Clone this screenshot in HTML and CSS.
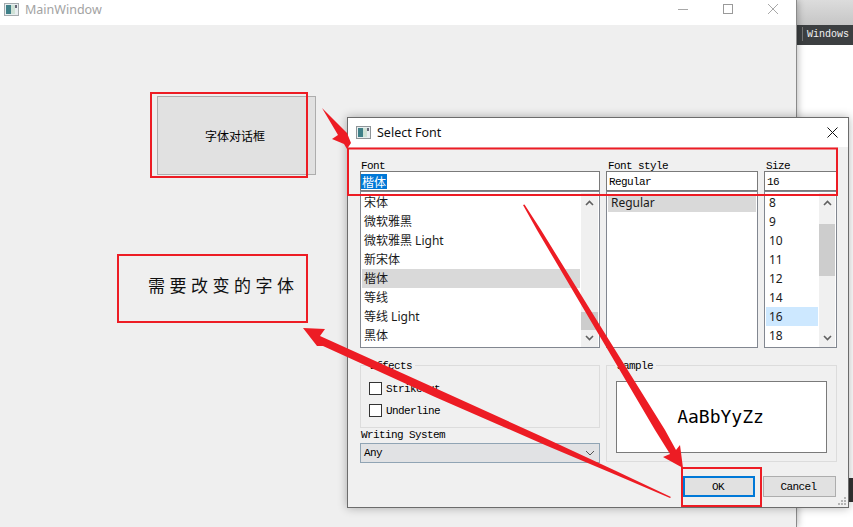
FILE: index.html
```html
<!DOCTYPE html>
<html lang="zh">
<head>
<meta charset="utf-8">
<title>Select Font</title>
<link rel="stylesheet" href="styles.css">
</head>
<body>
<div class="desktop">
  <div class="backdrop">
    <div class="backdrop-top"></div>
    <div class="backdrop-bar"><span class="backdrop-sep"></span><span>Windows</span></div>
    <div class="backdrop-tab"></div>
  </div>

  <section class="window main-window">
    <header class="titlebar main-title">
      <svg class="app-icon" viewBox="0 0 15 13"><rect x=".5" y=".5" width="14" height="12" fill="#e8eef0" stroke="#a4abae"/><rect x="2" y="2" width="5" height="9" fill="#3f8088"/><rect x="7" y="2" width="4" height="9" fill="#cfe2d6"/><rect x="11" y="2" width="2" height="3" fill="#667"/></svg>
      <span class="main-title-text">MainWindow</span>
      <span class="controls">
        <svg viewBox="0 0 10 10"><path d="M0 5.500h10" stroke="#a8a8a8" fill="none"/></svg>
        <svg viewBox="0 0 10 10"><rect x=".5" y=".5" width="9" height="9" stroke="#9a9a9a" fill="none"/></svg>
        <svg viewBox="0 0 10 10"><path d="M0 0l10 10M10 0L0 10" stroke="#a8a8a8" fill="none"/></svg>
      </span>
    </header>
    <div class="main-body">
      <button class="open-button">字体对话框</button>
      <p class="sample-label">需要改变的字体</p>
    </div>
  </section>

  <section class="window dialog">
    <header class="titlebar dialog-title">
      <svg class="app-icon" viewBox="0 0 15 13"><rect x=".5" y=".5" width="14" height="12" fill="#e8eef0" stroke="#8e9598"/><rect x="2" y="2" width="5" height="9" fill="#3f8088"/><rect x="7" y="2" width="4" height="9" fill="#cfe2d6"/><rect x="11" y="2" width="2" height="3" fill="#667"/></svg>
      <span class="dialog-title-text">Select Font</span>
      <svg class="dialog-close" viewBox="0 0 11 11"><path d="M.5.5l10 10M10.500.5l-10 10" stroke="#111" fill="none"/></svg>
    </header>

    <div class="dialog-body">
      <div class="pickers">
        <div class="picker">
          <label class="mono picker-label">Font</label>
          <div class="field"><span class="selected-text">楷体</span></div>
          <div class="listbox">
            <ul class="rows rows-font">
              <li>宋体</li><li>微软雅黑</li><li>微软雅黑 Light</li><li>新宋体</li>
              <li class="row-current">楷体</li><li>等线</li><li>等线 Light</li><li>黑体</li>
            </ul>
            <div class="scrollbar">
              <svg class="chev" viewBox="0 0 9 6"><path d="M1 5l3.500-3.500L8 5" stroke="#606060" stroke-width="1.600" fill="none"/></svg>
              <div class="track"><div class="thumb thumb-font"></div></div>
              <svg class="chev" viewBox="0 0 9 6"><path d="M1 1l3.500 3.500L8 1" stroke="#606060" stroke-width="1.600" fill="none"/></svg>
            </div>
          </div>
        </div>
        <div class="picker">
          <label class="mono picker-label">Font style</label>
          <div class="field mono">Regular</div>
          <div class="listbox">
            <ul class="rows rows-style">
              <li class="row-current">Regular</li>
            </ul>
          </div>
        </div>
        <div class="picker">
          <label class="mono picker-label">Size</label>
          <div class="field mono">16</div>
          <div class="listbox">
            <ul class="rows rows-size">
              <li>8</li><li>9</li><li>10</li><li>11</li><li>12</li><li>14</li>
              <li class="row-active">16</li><li>18</li>
            </ul>
            <div class="scrollbar">
              <svg class="chev" viewBox="0 0 9 6"><path d="M1 5l3.500-3.500L8 5" stroke="#606060" stroke-width="1.600" fill="none"/></svg>
              <div class="track"><div class="thumb thumb-size"></div></div>
              <svg class="chev" viewBox="0 0 9 6"><path d="M1 1l3.500 3.500L8 1" stroke="#606060" stroke-width="1.600" fill="none"/></svg>
            </div>
          </div>
        </div>
      </div>

      <div class="lower">
        <div class="lower-left">
          <fieldset class="group effects">
            <legend class="mono">Effects</legend>
            <div class="check"><span class="box"></span><span class="mono">Strikeout</span></div>
            <div class="check"><span class="box"></span><span class="mono">Underline</span></div>
          </fieldset>
          <label class="mono ws-label">Writing System</label>
          <div class="combo mono">
            <span>Any</span>
            <svg class="combo-chev" viewBox="0 0 10 6"><path d="M1 1l4 4 4-4" stroke="#555" fill="none"/></svg>
          </div>
        </div>
        <fieldset class="group sample">
          <legend class="mono">Sample</legend>
          <div class="sample-box">AaBbYyZz</div>
        </fieldset>
      </div>

      <div class="actions">
        <button class="action mono action-default">OK</button>
        <button class="action mono">Cancel</button>
      </div>
    </div>
    <svg class="grip" viewBox="0 0 10 10"><path d="M7 1h2v2H7zM4 4h2v2H4zM7 4h2v2H7zM1 7h2v2H1zM4 7h2v2H4zM7 7h2v2H7z" fill="#b4b4b4"/></svg>
  </section>

  <svg class="annotations" viewBox="0 0 853 527">
    <g fill="none" stroke="#ed1c24" stroke-width="2">
      <rect x="151" y="93" width="156" height="84"/>
      <rect x="348" y="148.500" width="489" height="46.500"/>
      <rect x="118" y="255" width="189" height="67"/>
      <rect x="682" y="468" width="79" height="38"/>
    </g>
    <g fill="#ed1c24">
      <path d="M322 108L347 133L351 143L347 149L344 144L332 139L338 135Z"/>
      <path d="M523 205L524.500 204.500L541 230L609 340L665 430L676 450L680 445L683 468L663 457L670 454L655 430L602 340L537 230Z"/>
      <path d="M303 328L325 329L320 336L435 388L545 438L615 470.600L671 497L670 498L615 474.600L545 445L435 397L323 346L317 346Z"/>
    </g>
  </svg>
</div>
</body>
</html>
```
FILE: styles.css
```css
* { box-sizing: border-box; }

html, body {
  margin: 0;
  padding: 0;
  background: #fff;
}

.desktop {
  position: relative;
  width: 853px;
  height: 527px;
  overflow: hidden;
  background: #fff;
  font-family: "Noto Sans", "Noto Sans CJK SC", sans-serif;
  font-size: 12px;
  color: #000;
}

.backdrop {
  margin-left: 797px;
  display: flex;
  flex-direction: column;
  height: 100%;
  position: relative;
}

.backdrop-top {
  height: 25px;
  background: linear-gradient(#dcdcdc, #c6c6c6);
}

.backdrop-bar {
  height: 20px;
  background: #3c3f41;
  color: #f2f2f2;
  display: flex;
  align-items: center;
  gap: 4px;
  padding: 0 0 2px 5px;
  font-family: "Liberation Mono", monospace;
  font-size: 10px;
}

.backdrop-sep {
  width: 1px;
  height: 14px;
  background: #777;
}

.backdrop-tab {
  position: absolute;
  right: 0;
  top: 478px;
  width: 4px;
  height: 24px;
  background: #333;
}

.window {
  position: absolute;
}

.titlebar {
  display: flex;
  align-items: center;
  background: #fff;
}

.app-icon {
  width: 15px;
  height: 13px;
  flex: none;
}

.main-window {
  left: 0;
  top: 0;
  width: 797px;
  height: 527px;
  background: #efefef;
  border-right: 1px solid #8a8a8a;
  box-shadow: 1px 0 7px rgba(0, 0, 0, .28);
}

.main-title {
  height: 25px;
  padding: 0 0 7px 4px;
}

.main-title-text {
  margin-left: 6px;
  color: #a3a3a3;
  font-size: 12.500px;
  line-height: 17px;
}

.controls {
  margin-left: auto;
  margin-right: 18px;
  display: flex;
  gap: 35px;
}

.controls svg {
  width: 10px;
  height: 10px;
  display: block;
}

.main-body {
  padding-top: 71px;
}

.open-button {
  display: block;
  margin: 0 0 0 157px;
  width: 159px;
  height: 79px;
  padding: 0 3px 0 0;
  background: #e1e1e1;
  border: 1px solid #adadad;
  font-family: "Noto Sans CJK SC", sans-serif;
  font-size: 12px;
  color: #000;
}

.sample-label {
  margin: 98px 0 0 148px;
  line-height: 24px;
  font-family: "Noto Sans CJK SC", sans-serif;
  font-size: 17px;
  letter-spacing: 4.500px;
  color: #101010;
}

.dialog {
  left: 347px;
  top: 117px;
  width: 502px;
  height: 391px;
  background: #f0f0f0;
  border: 1px solid #6c6c6c;
  box-shadow: 0 0 9px rgba(0, 0, 0, .3);
}

.dialog-title {
  height: 29px;
  padding: 0 10px 0 8px;
}

.dialog-title-text {
  margin-left: 6px;
  font-size: 12.500px;
  color: #111;
}

.dialog-close {
  width: 11px;
  height: 11px;
  margin-left: auto;
}

.dialog-body {
  padding: 13px 11px 0 12px;
}

.mono {
  font-family: "Liberation Mono", monospace;
  font-size: 11px;
  letter-spacing: -.600px;
  color: #000;
}

.pickers {
  display: grid;
  grid-template-columns: 240px 152px 73px;
  gap: 6px;
}

.picker {
  display: flex;
  flex-direction: column;
}

.picker-label {
  height: 11px;
  line-height: 13px;
  padding-left: 1px;
}

.picker + .picker .picker-label {
  padding-left: 2px;
}

.field {
  height: 20px;
  border: 1px solid #7a7a7a;
  background: #fff;
  display: flex;
  align-items: center;
  padding: 1px 0 0 2px;
  line-height: 16px;
}

.selected-text {
  margin: -1px 0 0 -2px;
  background: #0078d7;
  color: #fff;
  font-family: "Noto Sans CJK SC", sans-serif;
  font-size: 12px;
  line-height: 15px;
  padding: 0 1px;
}

.listbox {
  height: 157px;
  margin-top: 0;
  border: 1px solid #828790;
  background: #fff;
  display: flex;
  padding: 1px 1px 0 1px;
  overflow: hidden;
}

.rows {
  list-style: none;
  margin: 0;
  padding: 0;
  flex: 1;
  min-width: 0;
  font-family: "Noto Sans", "Noto Sans CJK SC", sans-serif;
  font-size: 12px;
  color: #1a1a1a;
}

.rows li {
  height: 19px;
  line-height: 20px;
  padding-left: 3px;
  white-space: nowrap;
}

.rows-font li {
  padding-left: 2px;
}

.rows .row-current {
  background: #d9d9d9;
}

.rows .row-active {
  background: #cde8ff;
}

.rows-style {
  padding-top: 2px;
}

.rows-style li {
  height: 17px;
  line-height: 16px;
  padding-left: 3px;
}

.scrollbar {
  width: 17px;
  margin-left: 1px;
  flex: none;
  background: #f0f0f0;
  display: flex;
  flex-direction: column;
  align-items: center;
  padding: 7px 0 6px;
  position: relative;
}

.chev {
  width: 9px;
  height: 6px;
  flex: none;
}

.track {
  flex: 1;
  width: 100%;
  padding-top: 0;
}

.thumb {
  width: 100%;
  background: #cdcdcd;
}

.thumb-font {
  margin-top: 106px;
  height: 18px;
}

.thumb-size {
  margin-top: 18px;
  height: 52px;
}

.rows-size + .scrollbar {
  width: 16px;
}

.lower {
  display: grid;
  grid-template-columns: 240px 231px;
  gap: 6px;
  margin-top: 17px;
}

.lower-left {
  display: flex;
  flex-direction: column;
}

.group {
  margin: 0;
  border: 1px solid #dcdcdc;
  min-width: 0;
  position: relative;
}

.group legend {
  padding: 0 3px 0 2px;
  height: 11px;
  line-height: 12px;
  margin-left: -1px;
}

.effects {
  height: 68px;
  margin-top: -5px;
  padding: 11px 9px 0 8px;
  display: flex;
  flex-direction: column;
  gap: 9px;
}

.check {
  display: flex;
  align-items: center;
  gap: 4px;
  height: 13px;
}

.box {
  width: 13px;
  height: 13px;
  border: 1px solid #333;
  background: #fff;
}

.ws-label {
  height: 15px;
  line-height: 15px;
  padding-left: 1px;
  margin-top: 0;
}

.combo {
  height: 20px;
  border: 1px solid #90a4b4;
  background: #e1e2e4;
  display: flex;
  align-items: center;
  justify-content: space-between;
  padding: 0 4px 0 3px;
}

.combo-chev {
  width: 10px;
  height: 6px;
}

.sample {
  height: 102px;
  margin-top: -5px;
  padding: 10px 9px 0 9px;
}

.sample-box {
  height: 72px;
  border: 1px solid #7a7a7a;
  background: #fff;
  display: flex;
  align-items: center;
  justify-content: center;
  font-family: "DejaVu Sans Mono", monospace;
  font-size: 18px;
  padding: 0 2px 2px 0;
}

.actions {
  display: flex;
  justify-content: flex-end;
  gap: 8px;
  margin-top: 13px;
  padding-right: 1px;
}

.action {
  width: 73px;
  height: 21px;
  padding: 0 2px 0 0;
  background: #e1e1e1;
  border: 1px solid #adadad;
  color: #000;
}

.action-default {
  width: 72px;
  border: 2px solid #0078d7;
}

.grip {
  position: absolute;
  right: 1px;
  bottom: 1px;
  width: 10px;
  height: 10px;
}

.annotations {
  position: absolute;
  inset: 0;
  width: 853px;
  height: 527px;
  pointer-events: none;
}
```
